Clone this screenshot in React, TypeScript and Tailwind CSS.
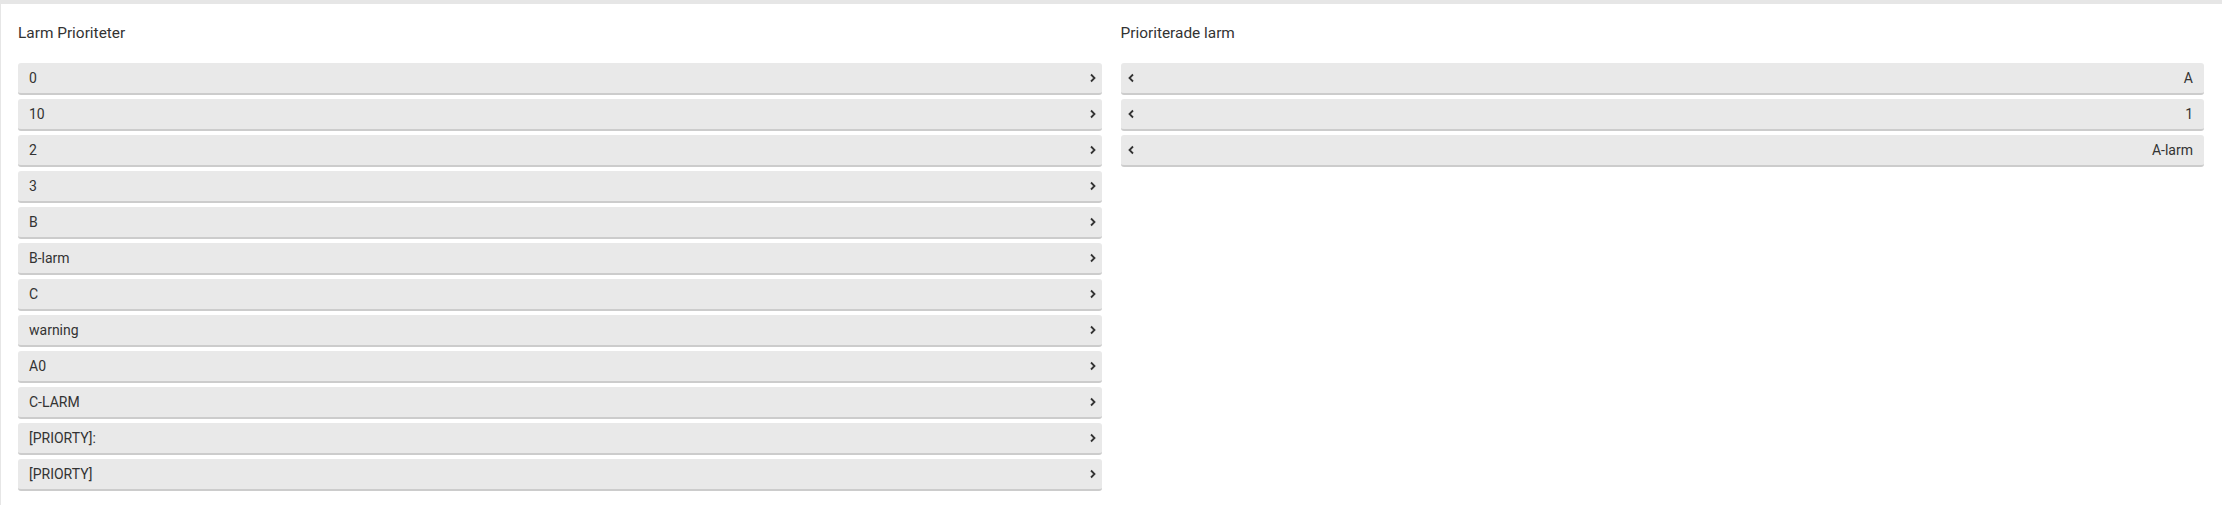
import React from "react";

const LEFT_ITEMS = [
  "0",
  "10",
  "2",
  "3",
  "B",
  "B-larm",
  "C",
  "warning",
  "A0",
  "C-LARM",
  "[PRIORTY]:",
  "[PRIORTY]",
];

const RIGHT_ITEMS = ["A", "1", "A-larm"];

function Chevron({ dir }: { dir: "left" | "right" }) {
  return (
    <svg width="8" height="10" viewBox="0 0 8 10" className="shrink-0">
      <polyline
        points={dir === "right" ? "2,1.5 5.5,5 2,8.5" : "6,1.5 2.5,5 6,8.5"}
        fill="none"
        stroke="#333"
        strokeWidth="1.8"
      />
    </svg>
  );
}

function Row({ label, dir }: { label: string; dir: "left" | "right" }) {
  if (dir === "left") {
    return (
      <div className="flex h-[32px] items-center rounded-[3px] border-b-2 border-[#cccccc] bg-[#e9e9e9] pl-[6px] pr-[11px] text-[14px] text-[#333]">
        <Chevron dir="left" />
        <span className="flex-1 text-right">{label}</span>
      </div>
    );
  }
  return (
    <div className="flex h-[32px] items-center rounded-[3px] border-b-2 border-[#cccccc] bg-[#e9e9e9] pl-[11px] pr-[5px] text-[14px] text-[#333]">
      <span className="flex-1">{label}</span>
      <Chevron dir="right" />
    </div>
  );
}

export default function App() {
  return (
    <div
      className="h-[505px] w-full border-l border-t-[4px] border-[#e6e6e6] bg-white pl-[17px] pr-[18px] pt-[19px]"
      style={{ fontFamily: "Roboto, 'Liberation Sans', sans-serif" }}
    >
      <div className="grid grid-cols-2 gap-[19px]">
        <section>
          <h2 className="mb-[20px] h-[20px] text-[15.4px] leading-[20px] text-[#333]">
            Larm Prioriteter
          </h2>
          <div className="flex flex-col gap-[4px]">
            {LEFT_ITEMS.map((item) => (
              <Row key={item} label={item} dir="right" />
            ))}
          </div>
        </section>
        <section>
          <h2 className="mb-[20px] h-[20px] text-[15.4px] leading-[20px] text-[#333]">
            Prioriterade larm
          </h2>
          <div className="flex flex-col gap-[4px]">
            {RIGHT_ITEMS.map((item) => (
              <Row key={item} label={item} dir="left" />
            ))}
          </div>
        </section>
      </div>
    </div>
  );
}
